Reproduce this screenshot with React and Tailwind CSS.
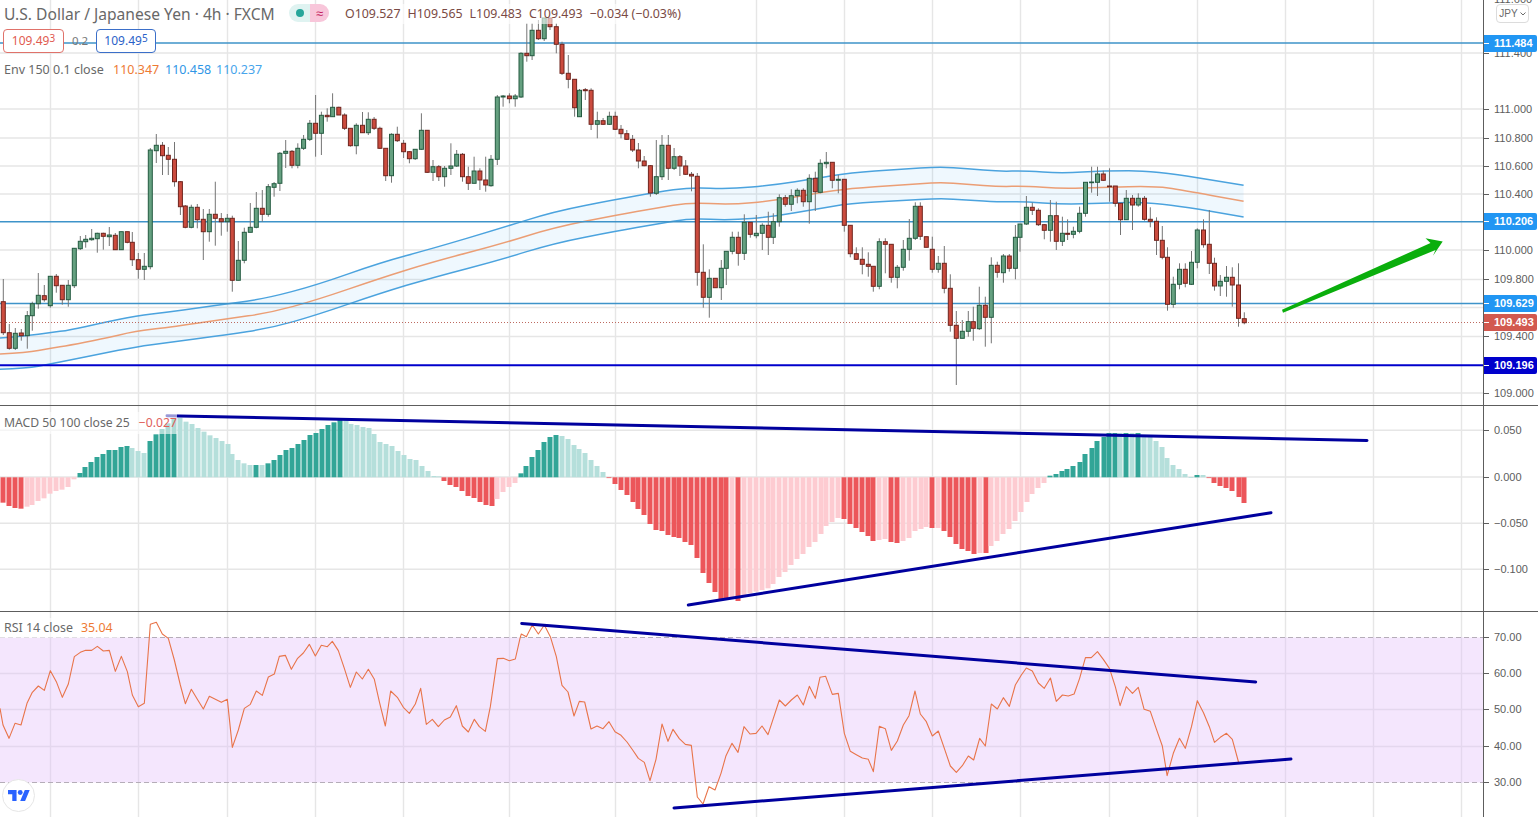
const W = 1483;
// [x, bodyTop, bodyBottom, wickTop, wickBottom, isGreen]
const candles = [
[3.3,301.7,332.7,279,335,0],[9.3,332.7,348.3,324,349.7,0],[15.3,333.3,348.3,328,350,1],[21.3,333,335.7,329,340.7,0],[27.3,315.7,335.7,311,348.7,1],[32.3,303.7,315.7,301.7,330.7,1],[38.3,295.3,303.7,273,308.7,1],[44.3,295.7,299.7,285,301.7,0],[50.3,276.3,305.7,276,307.7,1],[56.3,276.3,285.7,274,292.7,0],[62.3,285.3,299.7,285,304.7,0],[68.3,285.3,299.7,280,306.7,1],[74.3,248.3,285.7,248,288,1],[80.3,241.3,248.7,236,250,1],[85.7,239.3,241.7,235,247.7,1],[91.7,238.3,239.7,229,240.7,1],[97.3,233.3,238.7,232.7,252.7,1],[103.3,233.3,236.3,232.7,249.7,0],[109.3,235,236.7,227,246,1],[115.3,235.3,249.7,233,249.7,0],[121.3,231.7,249.7,231.7,249.7,1],[127.3,231.7,242.3,231.7,243.3,0],[132.3,242.3,259.7,232,266,0],[138.3,259.7,269.3,253,278.7,0],[144.3,266.3,269.3,253,280,1],[150.3,150,266.7,148,269.3,1],[156.3,145.3,150.7,134,163,1],[162.5,145.3,155.7,142,175,0],[168.3,155.3,159.3,147,175,0],[174.5,159.3,181.7,142,186.7,0],[180.4,181.7,206.7,181,215,0],[185.3,206,227.3,205,228.3,0],[191.3,207.3,227.3,204.7,228.3,1],[197.3,207.3,219.7,204,228.3,0],[203.3,219.3,231.7,209,260,0],[209.3,214.3,231.7,209,241.7,1],[215.3,214.3,218.3,181.7,245.7,0],[221.3,218.7,221.7,213,235.7,0],[227.3,218.3,221.7,214,231.7,1],[232.3,218.3,280.3,215.7,291.7,0],[238.3,260.3,280.3,241,280.3,1],[244.3,232.3,260.3,227.7,263.3,1],[250.3,227.3,232.3,203,232.3,1],[256.3,208.3,227.3,192,228.3,1],[262.3,208.3,214.3,190,221.7,0],[268.3,186.7,214.3,184,216.7,1],[274.1,183.7,187.3,182,196.7,1],[279.9,153.3,183.3,152,191,1],[285.7,151.3,153.3,140,168,1],[292,151.3,165.3,150,168.3,0],[297.8,148.3,165.3,143.3,168.3,1],[303.6,139.3,148.3,135,150,1],[309.8,123.3,139.3,120,141,1],[315.6,123.3,133.3,95,156.7,0],[321.4,115.3,133.3,111.7,155,1],[327.2,115.3,116.7,108.3,121.7,0],[332.6,107.3,116.7,93.3,116.7,1],[338.8,107.3,115,106.7,115,0],[344.6,115,128.3,113.3,130,0],[350.4,128.3,145.7,128.3,146.7,0],[356.3,125.3,145.7,123.3,154.3,1],[362.5,125.3,132.7,112,133,0],[368.3,119.3,132.7,112.3,135,1],[374.1,119.3,128.3,117,130,0],[379.9,128.3,148.3,126.7,149,0],[385.7,148.3,175.7,148.3,181,0],[391.5,134.3,175.7,133.3,182.7,1],[397.3,134.3,140.7,126.7,142,0],[403.6,143.3,151.7,140,158,0],[409.4,151.7,158.7,151,163.3,0],[415.2,149.3,158.7,149,160,1],[421.4,130.3,149.3,113.3,150,1],[427.2,130.3,172.3,130.3,173,0],[433,166.7,172.3,160,181,1],[438.8,166.7,176.7,165,181,0],[444.6,168.3,176.7,166,186.7,1],[450.9,166,168.3,143.3,175,1],[456.7,154.3,166,150,167,1],[462.5,154.3,176.7,153,181.7,0],[468.3,176.7,183.3,166.7,190,0],[474.1,171,183.3,156.7,183.3,1],[479.9,171,180,168.3,190,0],[485.7,180,185,156.7,191.7,0],[491,159.3,185.7,155,186.7,1],[497.3,97,159.3,95,165,1],[503.1,96,97,95,106.7,1],[509.4,96,98.7,93.3,103.3,0],[515.2,96,98.7,94,106.7,1],[521,53.3,97,52.3,98,1],[526.8,53.3,55.7,23.3,61.7,0],[532.1,30.3,55.7,23.3,60,1],[538.4,30.3,38.7,20,40,0],[544.2,18,38.7,18,41,1],[550,18,26.7,18,30,0],[556.3,26.7,44.3,23.3,53.3,0],[562,44.3,73.3,41.7,75,0],[568.3,73.3,79.3,55,88.3,0],[574.6,79.3,107.7,79.3,116.7,0],[579.5,90.3,116.7,89,117,1],[585.3,89.7,90.7,88,100,0],[591.1,90.3,124.3,88.3,130,0],[597.3,120.7,124.3,111.7,138.3,1],[603.1,120.7,124.3,118,125,0],[609.4,116.3,124.3,111.7,125,1],[615.2,116.3,129.3,111.7,130,0],[621,129.3,133.7,125,138.3,0],[626.8,133.7,139.3,130,140,0],[632.6,139.3,150,135,152,0],[638.4,150,161,143,168.3,0],[644.2,161,165.7,156,166.3,0],[650.4,165.7,193,165,196.7,0],[656.3,176.7,193.3,140,195,1],[662,145.3,176.7,135,180,1],[668.3,145.3,168.3,135,180,0],[674.1,156.7,168.3,148,170,1],[679.9,156.7,166,155,176,0],[685.7,166,174.3,160,175,0],[691.5,174.3,176,172,191.3,0],
[697.3,176.3,272.3,173,285.7,0],[703.3,272.3,297.3,244.3,307.7,0],[709.3,278.3,297.3,269.3,317.7,1],[715.3,278.3,287.7,278.3,287.7,0],[721.3,268.3,287.7,260,300,1],[726.3,251.3,268.3,251.3,285,1],[732.3,237.3,251.3,231.7,254.3,1],[738.3,237.3,253.3,231.7,265.7,0],[744.3,222.3,253.3,214.3,260,1],[750.3,222.3,234.3,222.3,237.7,0],[756.3,233.3,235.7,215,238.3,1],[762.3,225.3,233.3,223.3,250,1],[768.3,225.3,237.3,211.7,255,0],[773.3,221.7,237.3,213.3,244,1],[779.3,197.7,221.7,194.3,226.7,1],[785.3,197.7,204.3,195,206.7,0],[791.3,195.7,204.3,189.3,211,1],[797.3,190.3,195.7,188.3,203.3,1],[803.3,190.3,201.7,188.3,206.7,0],[809.3,178.3,201.7,174.3,223.7,1],[815.3,178.3,191.7,171.7,211,0],[820.3,163.3,192.3,159.3,193.3,1],[826.3,162.3,163.7,152,168.3,1],[832.3,162.3,180.3,162.3,188.3,0],[838.3,179.3,180.3,175,193.3,1],[844.3,179.3,225.3,179.3,231.7,0],[850.3,225.3,253.7,225,257.3,0],[856.3,253.7,259.3,247.3,260,0],[862.3,259.3,264.3,247.3,274.3,0],[868.3,264.3,266.3,252.3,276.7,0],[873.3,266.3,286.3,266.3,291.7,0],[879.3,241.7,286.3,238.3,289.3,1],[885.3,241.7,244.3,238.3,273.3,0],[891.3,244.3,277.3,244.3,282.7,0],[897.3,267.3,277.3,265,288.3,1],[903.3,249.3,267.3,240,270.7,1],[909.3,238.3,249.3,219,260.7,1],[915.3,206.3,238.3,202.3,240,1],[920.3,206.3,236.3,202.3,240,0],[926.3,236.7,247.3,236.7,247.3,0],[932.3,249.3,269.3,236.7,272.7,0],[938.3,263.3,269.3,256,272.7,1],[944.3,263.3,288.3,246,293.3,0],[950.3,288.3,325.3,274.3,331.7,0],[956.3,325.3,338.3,311,385,0],[962.3,331.3,338.3,320,338.3,1],[968.3,321.7,331.3,311,336.7,1],[973.3,321.7,328.3,306.7,340.7,0],[979.3,305.3,328.7,286.7,330,1],[985.3,305.3,317.3,296.7,346.7,0],[991.3,265.3,317.3,257.3,343.3,1],[997.3,265.3,272.3,261.7,277.7,0],
[1003.4,256,272.7,254,282.7,1],[1009.3,256,268.3,254,271.7,0],[1015.4,237.3,268.3,225,279.3,1],[1020,224,237.3,224,251.7,1],[1026.4,207.3,224,196,225,1],[1032.3,207.3,210.3,202.7,215,0],[1038.4,210.3,224.7,208.3,226,0],[1044.3,224.7,230.3,224,239.3,0],[1050.4,215.7,230.3,200,241.7,1],[1056.3,215.7,241.3,201.7,250,0],[1062.4,233.3,241.3,216.7,246,1],[1067.6,233.3,234.3,219.3,240,0],[1073.4,231.3,234.3,226.7,238.3,1],[1079.6,213.3,231.3,206.7,233.3,1],[1085.5,182.3,213.3,182.3,216.7,1],[1091.6,182,182.7,166.7,192.7,1],[1097.5,174,182.3,166.7,196,1],[1103.3,174,180.3,170.7,181,0],[1109.5,186,186.7,168.3,201.7,0],[1115.3,186,203.3,186,206.7,0],[1120.5,203.3,219.7,203.3,235,0],[1126.3,198.3,219.7,190,220,1],[1132.5,198.3,205,195,230,0],[1138.3,198.3,205,193.3,206.7,1],[1144.5,198.3,219.3,196,220.7,0],[1150.3,219.3,221.3,207.3,227.3,0],[1156.5,221.3,240.3,217.3,255,0],[1162.3,240.3,257.3,226,259.3,0],[1167.5,257.3,304.3,247.3,310.7,0],[1173.3,284.3,304.3,276.7,307.7,1],[1179.5,269.3,284.3,263.3,289.3,1],[1185.3,269.3,283.3,263.3,287.3,0],[1191.5,262.3,284.3,251,285,1],[1197.3,230,262.3,228.3,268.3,1],[1203.5,230,244.7,219.3,247.7,0],[1209.3,244.3,263.3,210,274,0],[1214.5,263.3,286,257.7,290.7,0],[1220.3,281.3,286,275,296,1],[1226.5,277.3,281.3,266,296.7,1],[1232.3,277.3,285,267.3,306.7,0],[1238.5,285,318.3,263.3,326.7,0],[1244.3,318.7,322.7,312.3,324.3,0],
];

const env = {
  up: [[0,338],[26.7,336],[50,332.7],[70,330],[100,323.3],[136.7,315.7],[166.7,312.3],[200,307.7],[226.7,304],[266.7,298.3],[316.7,285],[380,262.7],[433.3,248.3],[500,228.5],[553.3,211.7],[616.7,199.3],[656.7,192.3],[690,187.3],[730,189],[773.3,185],[816.7,178.3],[850,172.7],[900,169.3],[940,166.7],[966.7,168.7],[1000,171.5],[1024,170.7],[1061.8,173.3],[1103,170.7],[1154.4,170.7],[1243.6,185.3]],
  mid: [[0,354],[26.7,352.7],[50,348.3],[70,345.3],[100,339.3],[136.7,331],[166.7,327.7],[226.7,319],[270,312.7],[316.7,300],[380,278.3],[433.3,261.7],[500,244.3],[553.3,227.7],[616.7,215],[656.7,208],[690,202.3],[730,204.7],[773.3,200.7],[816.7,193.3],[850,188.3],[900,185],[940,182.3],[966.7,184.3],[1000,186.7],[1024,186],[1061.8,188.7],[1103,187.3],[1154.4,186],[1182,190],[1243.6,201.3]],
  lo: [[0,369.3],[26.7,368.3],[50,364],[70,360],[100,354],[136.7,346.7],[166.7,342.7],[226.7,334.7],[270,328.3],[316.7,315],[380,293.3],[433.3,277.3],[500,260],[553.3,243.3],[616.7,231],[656.7,224],[690,218.3],[730,220.3],[773.3,216.7],[816.7,209],[850,203.3],[900,200.7],[940,198.3],[966.7,200],[1000,202],[1024,201.7],[1061.8,204.3],[1103,203.3],[1154.4,201.7],[1243.6,217]],
};
const pts = (a) => a.map((p) => p[0] + "," + p[1]).join(" ");
// smooth path through midpoints of the estimated points
const smooth = (a) => {
  let d = `M${a[0][0]} ${a[0][1]}`;
  for (let i = 1; i < a.length - 1; i++) {
    const mx = (a[i][0] + a[i + 1][0]) / 2;
    const my = (a[i][1] + a[i + 1][1]) / 2;
    d += ` Q${a[i][0]} ${a[i][1]} ${mx} ${my}`;
  }
  const l = a[a.length - 1];
  return d + ` L${l[0]} ${l[1]}`;
};

const seg = (xf, list) => list.map(([x, y, k]) => [xf(x), 405 + y / 3, k]);
const z3 = (x) => x / 3;
const z7 = (x) => 520 + x / 3;
const z8 = (x) => 1000 + x / 2.914;
const bars = [
  ...seg(z3, [[10,293,2],[28,303,2],[46,309,2],[64,311,2],[82,305,3],[97,300,3],[115,288,3],[133,280,3],[151,266,3],[169,258,3],[187,254,3],[205,246,3],[223,223,3],[241,204,0],[256,186,0],[274,171,0],[292,156,0],[310,147,0],[328,135,0],[346,135,0],[364,126,0],[382,123,0],[397,129,1],[415,138,1],[433,144,1],[451,108,0],[469,88,0],[487,72,0],[505,55,0],[523,42,0],[541,38,1],[558,50,1],[576,57,1],[594,69,1],[612,80,1],[630,91,1],[648,99,1],[666,108,1],[684,117,1],[697,147,1],[715,165,1],[733,175,1],[751,180,1],[769,180,0],[787,180,1],[805,175,0],[823,165,0],[841,150,0],[859,135,0],[877,129,0],[895,117,0],[913,105,0],[931,90,0],[949,84,0],[967,72,0],[985,60,0],[1003,52,0],[1019,45,0],[1037,45,1],[1053,57,1],[1071,60,1],[1089,66,1],[1107,69,1],[1123,87,1],[1141,111,1],[1159,117,1],[1177,123,1],[1195,138,1],[1213,150,1],[1231,162,1],[1249,165,1],[1267,183,1],[1285,198,1],[1303,213,1],[1318,214,1],[1333,228,2],[1351,240,2],[1369,246,2],[1387,258,2],[1405,273,2],[1423,279,2],[1441,291,2],[1459,300,2],[1477,303,2],[1492,282,3],[1510,261,3],[1528,246,3],[1546,234,3]]),
  ...seg(z7, [[4,205,0],[19,183,0],[37,156,0],[55,135,0],[73,111,0],[91,96,0],[109,90,0],[127,93,1],[145,102,1],[162,120,1],[178,132,1],[196,144,1],[214,165,1],[232,183,1],[250,201,1],[268,219,2],[286,237,2],[303,255,2],[320,270,2],[338,291,2],[355,312,2],[373,330,2],[391,357,2],[409,375,2],[427,378,2],[445,390,2],[461,396,2],[478,399,2],[496,411,2],[514,420,2],[532,459,2],[550,504,2],[568,534,2],[586,561,2],[604,582,2],[619,580,2],[636,578,3],[655,588,2],[672,570,3],[690,565,3],[708,560,3],[726,555,3],[743,550,3],[760,537,3],[778,516,3],[796,501,3],[814,480,3],[832,462,3],[850,447,3],[868,426,3],[885,411,3],[902,387,3],[919,363,3],[937,351,3],[955,339,3],[973,342,2],[991,357,2],[1009,369,2],[1027,381,2],[1044,393,2],[1060,408,2],[1078,405,3],[1096,402,3],[1114,411,2],[1132,414,2],[1150,408,3],[1168,399,3],[1185,378,3],[1202,372,3],[1219,366,3],[1237,369,2],[1255,369,3],[1273,378,2],[1291,396,2],[1309,417,2],[1327,432,2],[1345,438,2],[1361,447,2],[1379,444,3],[1397,444,2],[1414,423,3],[1432,408,3],[1450,387,3],[1468,372,3],[1486,348,3],[1502,321,3],[1520,291,3],[1537,267,3],[1555,249,3]]),
  ...seg(z8, [[129,234,3],[147,212,0],[164,207,0],[182,198,0],[196,192,0],[214,183,0],[232,171,0],[249,147,0],[267,129,0],[284,108,0],[302,96,0],[319,84,0],[334,84,0],[351,84,1],[368,84,0],[385,84,1],[403,84,0],[420,90,1],[438,96,1],[456,108,1],[473,126,1],[488,159,1],[505,180,1],[523,192,1],[540,207,1],[558,216,1],[575,210,0],[592,210,1],[610,219,2],[625,234,2],[642,243,2],[660,249,2],[677,258,2],[695,276,2],[712,294,2]]),
];
const barColor = ["#32a597", "#b5dfdb", "#ec565a", "#fdcbd1"];

const rz = (f, list) => list.map(([x, y]) => [f(x), 610 + y / 3]);
const rsi = [
  ...rz(z3, [[0,295],[9,345],[27,385],[45,340],[63,345],[81,280],[97,247],[115,228],[133,241],[151,182],[169,215],[187,262],[205,222],[223,140],[241,127],[257,121],[275,121],[292,109],[310,123],[328,121],[346,184],[364,139],[382,185],[397,255],[415,290],[433,280],[451,43],[469,37],[487,72],[505,85],[523,150],[541,225],[556,281],[574,238],[592,268],[610,297],[628,259],[646,268],[664,277],[682,268],[697,412],[715,360],[733,295],[751,283],[769,243],[787,256],[805,201],[823,192],[838,139],[856,136],[874,178],[892,146],[910,129],[928,103],[946,138],[964,106],[982,110],[997,94],[1015,122],[1033,175],[1051,232],[1069,186],[1087,207],[1105,178],[1123,208],[1138,275],[1156,348],[1172,243],[1192,262],[1210,292],[1228,310],[1246,282],[1262,235],[1279,343],[1297,328],[1315,350],[1333,330],[1351,321],[1369,287],[1387,348],[1405,366],[1423,328],[1438,350],[1456,364],[1471,290],[1492,146],[1510,145],[1528,152],[1546,147]]),
  ...rz(z7, [[0,85],[4,72],[19,80],[37,45],[55,72],[73,45],[91,80],[109,140],[126,226],[144,246],[162,318],[178,274],[194,276],[213,357],[231,348],[249,356],[267,335],[285,365],[303,376],[321,396],[338,420],[355,445],[373,457],[390,512],[408,448],[426,342],[444,394],[459,358],[478,386],[496,403],[514,406],[532,561],[549,582],[567,530],[585,540],[603,490],[618,437],[636,400],[654,427],[672,350],[690,372],[708,370],[726,348],[744,374],[760,325],[778,270],[796,288],[814,270],[832,255],[850,285],[868,229],[886,265],[900,202],[917,199],[937,253],[955,250],[973,370],[991,424],[1009,434],[1027,444],[1045,448],[1060,485],[1078,349],[1096,356],[1114,421],[1132,393],[1150,345],[1167,317],[1185,243],[1201,312],[1219,335],[1237,378],[1255,363],[1273,415],[1291,468],[1309,487],[1327,467],[1345,438],[1361,450],[1379,385],[1396,408],[1414,282],[1432,297],[1450,263],[1468,289],[1486,225],[1504,195],[1519,174],[1537,183],[1555,219]]),
  ...rz(z8, [[129,235],[147,204],[164,274],[182,255],[199,258],[216,252],[232,205],[249,143],[266,143],[284,125],[301,148],[319,175],[336,230],[350,287],[368,230],[386,250],[403,232],[420,298],[438,304],[456,358],[473,408],[487,497],[505,430],[523,385],[540,415],[558,350],[575,272],[593,308],[610,350],[625,397],[642,382],[660,370],[677,388],[695,456]]),
];

const vgrid = [50.5, 138.5, 227.5, 315.5, 403.5, 509.5, 615.5, 756.5, 844.5, 932.5, 1020.5, 1109.5, 1197.5, 1285.5, 1373.5, 1461.5];
const G = "#e6e6e6";

function VGrid({ y1, y2, color = G }) {
  return vgrid.map((x) => <line key={x} x1={x} x2={x} y1={y1} y2={y2} stroke={color} strokeWidth="1.4" />);
}
function HGrid({ ys, color = G }) {
  return ys.map((y) => <line key={y} x1="0" x2={W} y1={y} y2={y} stroke={color} strokeWidth="1.4" />);
}
function Trend({ a, b }) {
  return <line x1={a[0]} y1={a[1]} x2={b[0]} y2={b[1]} stroke="#00009e" strokeWidth="3" strokeLinecap="round" />;
}

function AxisTick({ y, children }) {
  return (
    <div className="absolute left-0 flex h-[14px] items-center text-[#5d5d5d]" style={{ top: y - 7 }}>
      <span className="h-px w-[5px] bg-[#5d5d5d]" />
      <span className="ml-[5px] whitespace-nowrap">{children}</span>
    </div>
  );
}
function AxisPill({ y, bg, children }) {
  return (
    <div className="absolute left-0 flex h-[17px] w-[53px] items-center rounded-r-[2px] font-bold text-white" style={{ top: y - 8.5, background: bg }}>
      <span className="h-px w-[5px] bg-white" />
      <span className="ml-[5px]">{children}</span>
    </div>
  );
}
function Axis({ top, children }) {
  return (
    <div className="relative w-[55px] shrink-0 border-l-[1.5px] border-[#5d5d5d] text-[11px] [font-family:'Liberation_Sans',sans-serif]">
      <div className="absolute inset-0" style={{ top: -top }}>{children}</div>
    </div>
  );
}
const Sup = ({ b, s }) => (
  <>{b}<span className="relative -top-[3px] text-[10px]">{s}</span></>
);

export default function App() {
  return (
    <div className="flex h-[817px] w-[1538px] flex-col overflow-hidden bg-white text-[#5d5d5d] [font-family:'Noto_Sans',sans-serif]">
      {/* Price pane */}
      <div className="flex h-[406px] shrink-0 border-b border-[#5d5d5d]">
        <div className="relative min-w-0 flex-1 overflow-hidden">
          <svg width={W} height="405" viewBox={`0 0 ${W} 405`} className="block">
            <VGrid y1={0} y2={405} />
            <HGrid ys={[53, 109, 138, 166, 194, 250, 279.5, 307.5, 336.5, 393]} />
            <polygon points={pts(env.up) + " " + pts([...env.lo].reverse())} fill="#2196f3" fillOpacity="0.07" />
            <path d={smooth(env.up)} fill="none" stroke="#4ba3de" strokeWidth="1.5" />
            <path d={smooth(env.mid)} fill="none" stroke="#eb9e75" strokeWidth="1.5" />
            <path d={smooth(env.lo)} fill="none" stroke="#4ba3de" strokeWidth="1.5" />
            <line x1="0" x2={W} y1="43" y2="43" stroke="#3e93c9" strokeWidth="1.4" />
            <line x1="0" x2={W} y1="221.7" y2="221.7" stroke="#3e93c9" strokeWidth="1.4" />
            <line x1="0" x2={W} y1="303.5" y2="303.5" stroke="#3e93c9" strokeWidth="1.4" />
            <line x1="0" x2={W} y1="322.5" y2="322.5" stroke="#bd6a60" strokeWidth="1" strokeDasharray="1 2" />
            {candles.map(([x, t, b, wt, wb, g]) => (
              <g key={x}>
                <line x1={x} x2={x} y1={wt} y2={wb} stroke="#757575" strokeWidth="1" />
                <rect x={x - 2} y={t} width="4" height={Math.max(b - t, 0.6)} fill={g ? "#65a080" : "#cb4b3e"} stroke={g ? "#245a40" : "#6f241d"} strokeWidth="1" />
              </g>
            ))}
            <line x1="0" x2={W} y1="365.3" y2="365.3" stroke="#0000cc" strokeWidth="2" />
            <polygon points="1282,309.8 1283,312.8 1435.5,250 1433,255.7 1442.7,241.5 1425.5,238.3 1430.5,243" fill="#0aae0c" />
          </svg>
          {/* Legend */}
          <div className="absolute left-0 top-0 flex flex-col items-start">
            <div className="flex h-[27px] items-start pt-[4px]">
              <span className="w-[289px] whitespace-nowrap pl-1 text-[15.6px] leading-[20px] text-[#686868]">U.S. Dollar / Japanese Yen · 4h · FXCM</span>
              <span className="flex h-[18px] w-10 overflow-hidden rounded-full">
                <span className="flex w-[21px] items-center justify-center bg-[#dff3f1]"><span className="h-2 w-2 rounded-full bg-[#26a69a]" /></span>
                <span className="flex w-[19px] items-center justify-center bg-[#f8c6da] text-[13px] leading-none text-[#c2185b]">≈</span>
              </span>
              <span className="ml-[16px] flex h-[20px] items-center gap-[7px] whitespace-nowrap bg-white/60 text-[12.4px] text-[#7a4a44]">
                <span>O109.527</span><span>H109.565</span><span>L109.483</span><span>C109.493</span><span>−0.034 (−0.03%)</span>
              </span>
            </div>
            <div className="ml-[3px] mt-[2px] flex h-[24px] items-center">
              <span className="flex h-[24px] w-[61px] items-center justify-center rounded-[4px] border border-[#e0726a] bg-white text-[12px] text-[#df5b50]"><Sup b="109.49" s="3" /></span>
              <span className="w-[32px] text-center text-[11.5px] text-[#787878]">0.2</span>
              <span className="flex h-[24px] w-[60px] items-center justify-center rounded-[4px] border border-[#3b6fc9] bg-white text-[12px] text-[#2a62c8]"><Sup b="109.49" s="5" /></span>
            </div>
            <div className="mt-[7px] flex h-[20px] items-center whitespace-nowrap pl-1 text-[12.5px]">
              <span className="w-[109px] text-[#686868]">Env 150 0.1 close</span>
              <span className="w-[52px] text-[#ee7a33]">110.347</span>
              <span className="w-[51px] text-[#2f96e6]">110.458</span>
              <span className="text-[#47a5ec]">110.237</span>
            </div>
          </div>
        </div>
        <Axis top={0}>
          <AxisTick y={-1}>111.600</AxisTick>
          <AxisTick y={53}>111.400</AxisTick>
          <AxisTick y={109}>111.000</AxisTick>
          <AxisTick y={138}>110.800</AxisTick>
          <AxisTick y={166}>110.600</AxisTick>
          <AxisTick y={194}>110.400</AxisTick>
          <AxisTick y={250}>110.000</AxisTick>
          <AxisTick y={279.5}>109.800</AxisTick>
          <AxisTick y={336.5}>109.400</AxisTick>
          <AxisTick y={393}>109.000</AxisTick>
          <AxisPill y={43} bg="#2196f3">111.484</AxisPill>
          <AxisPill y={221.7} bg="#2196f3">110.206</AxisPill>
          <AxisPill y={303.7} bg="#2196f3">109.629</AxisPill>
          <AxisPill y={322.5} bg="#d2594f">109.493</AxisPill>
          <AxisPill y={365.3} bg="#0000cc">109.196</AxisPill>
          <div className="absolute left-[12px] top-[4px] flex h-[19px] w-[33px] items-center justify-center gap-[2px] rounded-[4px] border border-[#dcdcdc] bg-white text-[10px] text-[#6a6a6a]">
            JPY
            <svg width="6" height="4" viewBox="0 0 6 4"><path d="M0.5 0.5 3 3 5.5 0.5" fill="none" stroke="#6a6a6a" strokeWidth="1" /></svg>
          </div>
        </Axis>
      </div>

      {/* MACD pane */}
      <div className="flex h-[206px] shrink-0 border-b border-[#5d5d5d]">
        <div className="relative min-w-0 flex-1 overflow-hidden">
          <svg width={W} height="205" viewBox={`0 406 ${W} 205`} className="block">
            <VGrid y1={406} y2={611} />
            <HGrid ys={[430.3, 477, 523.3, 569.3]} />
            {bars.map(([x, y, k], i) => {
              const base = 477.3;
              return <rect key={i} x={Math.round(x) - 2.5} y={Math.min(y, base)} width="5" height={Math.max(Math.abs(y - base), 0.8)} fill={barColor[k]} />;
            })}
            <Trend a={[167, 415.7]} b={[1367, 440.5]} />
            <Trend a={[688.3, 605]} b={[1271, 512.7]} />
          </svg>
          <div className="absolute left-0 top-[6px] flex h-[22px] w-[177px] items-center gap-[9px] whitespace-nowrap bg-white/60 pl-1 text-[12.2px]">
            <span className="text-[#686868]">MACD 50 100 close 25</span>
            <span className="text-[#e0605a]">−0.027</span>
          </div>
        </div>
        <Axis top={406}>
          <AxisTick y={430.3}>0.050</AxisTick>
          <AxisTick y={477}>0.000</AxisTick>
          <AxisTick y={523.3}>−0.050</AxisTick>
          <AxisTick y={569.3}>−0.100</AxisTick>
        </Axis>
      </div>

      {/* RSI pane */}
      <div className="flex min-h-0 flex-1">
        <div className="relative min-w-0 flex-1 overflow-hidden">
          <svg width={W} height="205" viewBox={`0 612 ${W} 205`} className="block">
            <VGrid y1={612} y2={817} />
            <rect x="0" y="637.5" width={W} height="145" fill="#f4e6fd" />
            <HGrid ys={[673.5, 709.5, 746.5]} color="#e4d7ee" />
            <VGrid y1={637} y2={783} color="#e4d7ee" />
            <line x1="0" x2={W} y1="637.5" y2="637.5" stroke="#b5adb8" strokeWidth="1" strokeDasharray="5 3" />
            <line x1="0" x2={W} y1="782.5" y2="782.5" stroke="#b5adb8" strokeWidth="1" strokeDasharray="5 3" />
            <polyline points={pts(rsi)} fill="none" stroke="#e8744a" strokeWidth="1.1" strokeLinejoin="round" />
            <Trend a={[521.7, 623.5]} b={[1255.7, 682]} />
            <Trend a={[674, 808]} b={[1291, 759]} />
          </svg>
          <div className="absolute left-0 top-[6px] flex h-[20px] w-[117px] items-center gap-[8px] whitespace-nowrap bg-white/60 pl-1 text-[12.4px]">
            <span className="text-[#686868]">RSI 14 close</span>
            <span className="text-[#ee7a33]">35.04</span>
          </div>
          <div className="absolute bottom-[5px] left-[2px] flex h-[33px] w-[33px] items-center justify-center rounded-full border border-[#e6e6e6] bg-white">
            <svg width="22" height="11" viewBox="0 4 36 18">
              <path d="M14 22H7V11H0V4h14v18zM28 22h-8l7.5-18h8L28 22z" fill="#2962ff" />
              <circle cx="20" cy="8" r="4" fill="#2962ff" />
            </svg>
          </div>
        </div>
        <Axis top={612}>
          <AxisTick y={637.5}>70.00</AxisTick>
          <AxisTick y={673.5}>60.00</AxisTick>
          <AxisTick y={709.5}>50.00</AxisTick>
          <AxisTick y={746.5}>40.00</AxisTick>
          <AxisTick y={782.5}>30.00</AxisTick>
        </Axis>
      </div>
    </div>
  );
}
